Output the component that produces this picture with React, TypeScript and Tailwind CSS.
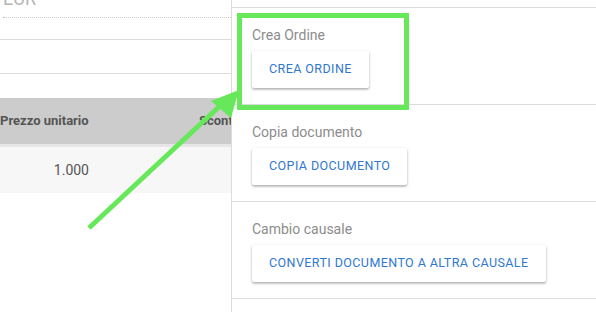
export default function App() {
  const sections = [
    { label: "Crea Ordine", button: "Crea ordine" },
    { label: "Copia documento", button: "Copia documento" },
    { label: "Cambio causale", button: "Converti documento a altra causale" },
  ];

  return (
    <div className="relative flex h-[312px] w-[596px] overflow-hidden bg-white font-['Roboto',sans-serif]">
      {/* left panel: document detail */}
      <div className="w-[232px] shrink-0 overflow-hidden border-r border-[#dcdcdc]">
        <div className="ml-[3px] h-[18px] overflow-hidden border-b border-dotted border-[#c8c8c8]">
          <div className="-mt-[12px] text-[18px] leading-[22px] text-[#b5b5b5]">EUR</div>
        </div>
        <div className="h-[22px] border-b border-[#dcdcdc]" />
        <div className="h-[34px] border-b border-[#dcdcdc]" />
        <div className="h-[24px]" />
        <div className="flex h-[46px] items-center bg-[#cccccc] text-[13px] font-bold text-[#555]">
          <span className="w-[199px] shrink-0">Prezzo unitario</span>
          <span className="whitespace-nowrap">Sconto</span>
        </div>
        <div className="h-[3px] bg-[#e6e6e6]" />
        <div className="flex h-[46px] items-center bg-[#f7f7f7] text-[14px] text-[#555]">
          <span className="w-[89px] text-right">1.000</span>
        </div>
      </div>

      {/* right panel: actions */}
      <div className="flex-1 pt-[7px]">
        <div className="border-t border-[#dcdcdc]">
          {sections.map((s) => (
            <div key={s.label} className="h-[97px] border-b border-[#dcdcdc] px-5 pt-[17px]">
              <div className="text-[14px] leading-[20px] text-[#8c8c8c]">{s.label}</div>
              <button className="mt-[6px] h-[37px] rounded-[2px] bg-white px-[17px] text-[12.5px] uppercase tracking-[0.42px] text-[#2f78d2] shadow-[0_1px_3px_rgba(0,0,0,0.25),0_2px_2px_rgba(0,0,0,0.12)]">
                {s.button}
              </button>
            </div>
          ))}
        </div>
      </div>

      {/* annotation overlay */}
      <div className="absolute left-[237px] top-[13px] h-[97px] w-[172px] border-[5px] border-[#66e85a]" />
      <svg className="absolute left-0 top-0" width="596" height="312" viewBox="0 0 596 312">
        <line x1="89" y1="228" x2="222" y2="104" stroke="#66e85a" strokeWidth="5" />
        <polygon points="239,90 211,101 231,118" fill="#66e85a" />
      </svg>
    </div>
  );
}
